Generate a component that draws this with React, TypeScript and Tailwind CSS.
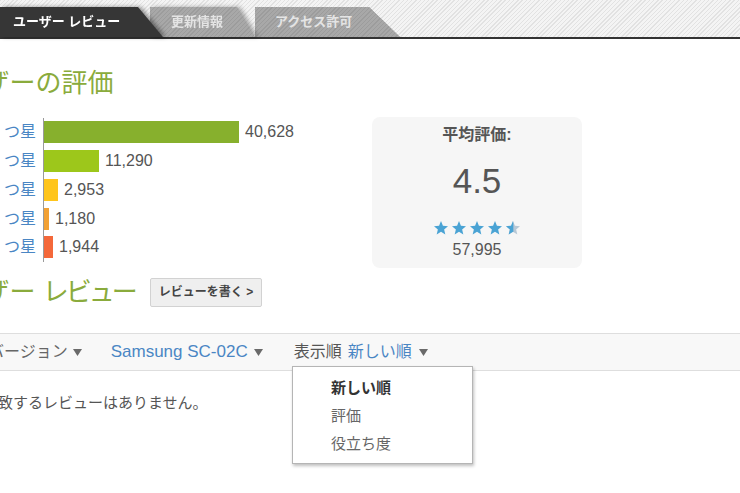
import React from "react";

const pts = "12,1.5 14.9,8.6 22.5,9.2 16.7,14.1 18.5,21.6 12,17.6 5.5,21.6 7.3,14.1 1.5,9.2 9.1,8.6";

const Star = ({ half = false }: { half?: boolean }) => (
  <svg width="16" height="16" viewBox="0 0 24 24">
    {half ? (
      <>
        <defs>
          <clipPath id="halfclip">
            <rect x="0" y="0" width="12.5" height="24" />
          </clipPath>
        </defs>
        <polygon points={pts} fill="#b7c8d6" />
        <polygon points={pts} fill="#4aa3d4" clipPath="url(#halfclip)" />
      </>
    ) : (
      <polygon points={pts} fill="#4aa3d4" />
    )}
  </svg>
);

const Tri = () => (
  <svg width="9" height="7" viewBox="0 0 9 7" className="shrink-0">
    <polygon points="0,0 9,0 4.5,7" fill="#6a6a6a" />
  </svg>
);

const rows = [
  { l: "5 つ星", w: 195, c: "#87b02d", n: "40,628" },
  { l: "4 つ星", w: 55, c: "#9dc71b", n: "11,290" },
  { l: "3 つ星", w: 14, c: "#ffc51c", n: "2,953" },
  { l: "2 つ星", w: 5, c: "#f2a134", n: "1,180" },
  { l: "1 つ星", w: 9, c: "#f4683a", n: "1,944" },
];

export default function App() {
  return (
    <div className="w-[740px] h-[493px] overflow-hidden bg-white font-['Liberation_Sans','Noto_Sans_CJK_JP',sans-serif] text-[#555]">
      {/* Tab bar */}
      <div className="flex items-end h-[39px] border-b-2 border-[#333] bg-[#ececec] bg-[image:repeating-linear-gradient(135deg,#e2e2e2_0px,#e2e2e2_1px,#f4f4f4_1px,#f4f4f4_3px)]">
        <div className="relative z-20 drop-shadow-[3px_0_2px_rgba(0,0,0,0.4)]">
          <div className="w-[163px] h-[30px] bg-[#363636] [clip-path:polygon(0_0,138px_0,163px_100%,0_100%)] flex items-center pl-[13px] text-[13px] font-bold text-white">
            ユーザー レビュー
          </div>
        </div>
        <div className="relative z-10 ml-[-13px] drop-shadow-[3px_0_2px_rgba(0,0,0,0.3)]">
          <div className="w-[105px] h-[30px] bg-[#a2a2a2] bg-[image:repeating-linear-gradient(135deg,#9c9c9c_0px,#9c9c9c_1px,#a8a8a8_1px,#a8a8a8_3px)] [clip-path:polygon(0_0,87px_0,105px_100%,0_100%)] flex items-center pl-[21px] text-[13px] font-bold text-[#e4e4e4]">
            更新情報
          </div>
        </div>
        <div className="w-[145px] h-[30px] bg-[#a2a2a2] bg-[image:repeating-linear-gradient(135deg,#9c9c9c_0px,#9c9c9c_1px,#a8a8a8_1px,#a8a8a8_3px)] [clip-path:polygon(0_0,114px_0,145px_100%,0_100%)] flex items-center pl-[20px] text-[13px] font-bold text-[#e4e4e4]">
          アクセス許可
        </div>
      </div>

      {/* Main */}
      <div className="ml-[-68px] w-[808px]">
        <h2 className="mt-[29px] text-[26px] leading-[30px] text-[#8aab3c] font-normal whitespace-nowrap">
          ユーザーの評価
        </h2>

        <div className="flex items-start mt-[20px]">
          <div className="flex w-[440px]">
            <div className="flex flex-col w-[104px]">
              {rows.map((r) => (
                <div key={r.l} className="h-[28.75px] flex items-center justify-end text-[16px] text-[#4a86c4] whitespace-nowrap">
                  {r.l}
                </div>
              ))}
            </div>
            <div className="ml-[7px] flex flex-col border-l border-[#9a9a9a]">
              {rows.map((r) => (
                <div key={r.n} className="h-[28.75px] flex items-center">
                  <div className="h-[22px]" style={{ width: r.w, backgroundColor: r.c }} />
                  <span className="ml-[6px] text-[16px] text-[#555]">{r.n}</span>
                </div>
              ))}
            </div>
          </div>
          <div className="mt-[-1px] w-[210px] h-[151px] rounded-[8px] bg-[#f6f6f6] flex flex-col items-center pt-[8px]">
            <div className="text-[16px] leading-[20px] font-bold text-[#555]">平均評価:</div>
            <div className="mt-[16px] text-[35px] leading-[40px] text-[#555]">4.5</div>
            <div className="mt-[19px] flex gap-[2px] h-[16px] items-center">
              <Star />
              <Star />
              <Star />
              <Star />
              <Star half />
            </div>
            <div className="mt-[4px] text-[16px] leading-[20px] text-[#555]">57,995</div>
          </div>
        </div>

        <div className="flex items-center mt-[9px] h-[30px]">
          <h2 className="w-[218px] text-[26px] leading-[30px] text-[#8aab3c] font-normal whitespace-nowrap">
            ユーザー <span className="tracking-[-3px]">レビュー</span>
          </h2>
          <button className="w-[112px] h-[29px] border border-[#d2d2d2] bg-[#efefef] text-[12px] font-bold text-[#444] flex items-center justify-center rounded-[2px]">
            レビューを書く &gt;
          </button>
        </div>

        <div className="relative mt-[26px] h-[38px] border-y border-[#dedede] bg-[#f8f8f8] flex items-center pl-[56px] text-[16px] whitespace-nowrap">
          <div className="flex items-center text-[#666]">
            <span>バージョン</span>
            <span className="ml-[5px]"><Tri /></span>
          </div>
          <div className="flex items-center ml-[29px] text-[#4a86c4]">
            <span className="text-[17px]">Samsung SC-02C</span>
            <span className="ml-[6px]"><Tri /></span>
          </div>
          <div className="flex items-center ml-[31px]">
            <span className="text-[#555]">表示順</span>
            <span className="ml-[6px] text-[#4a86c4]">新しい順</span>
            <span className="ml-[7px]"><Tri /></span>
          </div>
          <div className="absolute z-20 left-[360px] top-[32px] w-[181px] h-[98px] bg-white border border-[#b5b5b5] shadow-[1px_2px_3px_rgba(0,0,0,0.25)] pt-[7px] pl-[38px] text-[15px]">
            <div className="h-[28px] flex items-center font-bold text-[#333]">新しい順</div>
            <div className="h-[28px] flex items-center text-[#666]">評価</div>
            <div className="h-[28px] flex items-center text-[#666]">役立ち度</div>
          </div>
        </div>

        <div className="mt-[22px] pl-[51px] text-[15px] leading-[20px] text-[#555] whitespace-nowrap">
          一致するレビューはありません。
        </div>
      </div>
    </div>
  );
}
